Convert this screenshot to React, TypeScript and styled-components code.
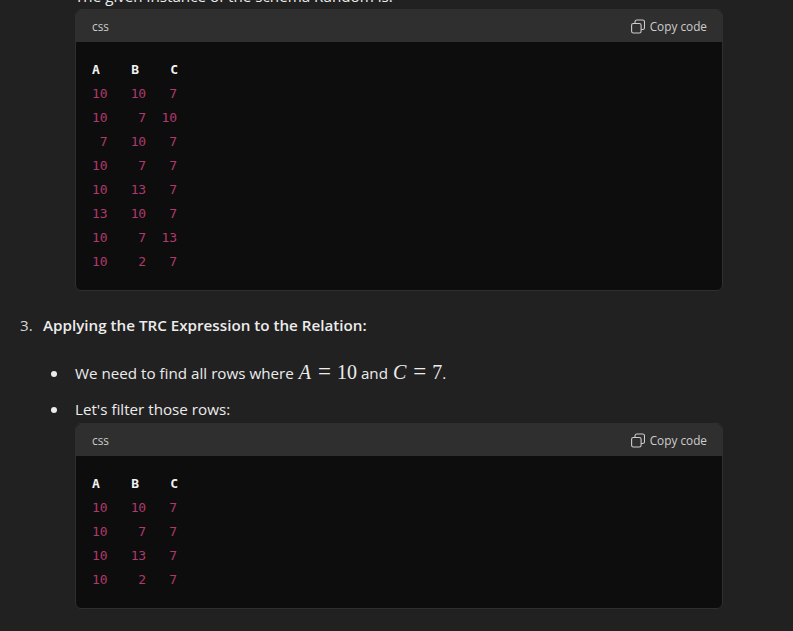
import React from 'react'
import styled, { createGlobalStyle } from 'styled-components'

const GlobalStyle = createGlobalStyle`
  html, body {
    margin: 0;
    height: 100%;
    background: #212121;
    overflow: hidden;
  }
`

const Page = styled.div`
  width: 793px;
  height: 631px;
  overflow: hidden;
  background: #212121;
  color: #ececec;
  font-family: 'Open Sans', 'Noto Sans', sans-serif;
  font-size: 15.2px;
  line-height: 24px;
`

const Thread = styled.div`
  margin-top: -16px;
  padding-left: 75px;
  padding-right: 70px;
`

const Paragraph = styled.p`
  margin: 0 0 1px;
  height: 24px;
`

const CodeBlock = styled.div`
  border: 1px solid #2f2f2f;
  border-radius: 6px;
  overflow: hidden;
  background: #0d0d0d;
`

const CodeHeader = styled.div`
  height: 32px;
  background: #2f2f2f;
  display: flex;
  align-items: center;
  justify-content: space-between;
  padding: 0 15px 0 16px;
  font-size: 11.8px;
  color: #cdcdcd;
`

const CopyButton = styled.span`
  display: flex;
  align-items: center;
  gap: 5px;
`

const Code = styled.pre`
  margin: 0;
  padding: 16px;
  font-family: 'DejaVu Sans Mono', 'Liberation Mono', monospace;
  font-size: 13px;
  letter-spacing: -0.1px;
  line-height: 24px;
  color: #b03a6c;
`

const HeadCell = styled.b`
  color: #f2f2f2;
  font-weight: 700;
  letter-spacing: 0;
`

const StepRow = styled.div`
  display: flex;
  margin: 22px 0 0 -55px;
  height: 24px;
`

const StepNumber = styled.span`
  width: 23px;
  color: #d6d6d6;
`

const StepTitle = styled.strong`
  font-weight: 600;
  color: #ececec;
`

const BulletList = styled.ul`
  list-style: none;
  margin: 24px 0 2px;
  padding: 0;
`

const Bullet = styled.li<{ $gap?: number }>`
  position: relative;
  height: 24px;
  margin-top: ${(p) => p.$gap ?? 0}px;

  &::before {
    content: '';
    position: absolute;
    left: -24px;
    top: 10px;
    width: 6px;
    height: 6px;
    border-radius: 50%;
    background: #ececec;
  }
`

const MathText = styled.span`
  font-family: 'Liberation Serif', 'DejaVu Serif', serif;
  font-size: 20px;
  line-height: 0;
`

const MathVar = styled.i`
  font-style: italic;
  margin: 0 1px;
`

const MathOp = styled.span`
  margin: 0 6px;
  font-size: 23px;
  line-height: 0;
`

const CopyIcon = () => (
  <svg width="14" height="15" viewBox="0 0 14 15" fill="none" stroke="#cdcdcd" strokeWidth="1.1">
    <rect x="4" y="1" width="9.5" height="9.5" rx="1.8" />
    <rect x="0.6" y="4.5" width="9.5" height="9.5" rx="1.8" fill="#2f2f2f" />
  </svg>
)

const Block = ({ rows }: { rows: string[] }) => (
  <CodeBlock>
    <CodeHeader>
      <span>css</span>
      <CopyButton>
        <CopyIcon />
        Copy code
      </CopyButton>
    </CodeHeader>
    <Code>
      <HeadCell>A    B    C</HeadCell>
      {'\n' + rows.join('\n')}
    </Code>
  </CodeBlock>
)

const firstRows = [
  '10   10   7',
  '10    7  10',
  ' 7   10   7',
  '10    7   7',
  '10   13   7',
  '13   10   7',
  '10    7  13',
  '10    2   7',
]

const filteredRows = ['10   10   7', '10    7   7', '10   13   7', '10    2   7']

export default function App() {
  return (
    <Page>
      <GlobalStyle />
      <Thread>
        <Paragraph>The given instance of the schema Random is:</Paragraph>
        <Block rows={firstRows} />
        <StepRow>
          <StepNumber>3.</StepNumber>
          <StepTitle>Applying the TRC Expression to the Relation:</StepTitle>
        </StepRow>
        <BulletList>
          <Bullet>
            We need to find all rows where{' '}
            <MathText>
              <MathVar>A</MathVar>
              <MathOp>=</MathOp>10
            </MathText>{' '}
            and{' '}
            <MathText>
              <MathVar>C</MathVar>
              <MathOp>=</MathOp>7
            </MathText>
            .
          </Bullet>
          <Bullet $gap={12}>Let's filter those rows:</Bullet>
        </BulletList>
        <Block rows={filteredRows} />
      </Thread>
    </Page>
  )
}
